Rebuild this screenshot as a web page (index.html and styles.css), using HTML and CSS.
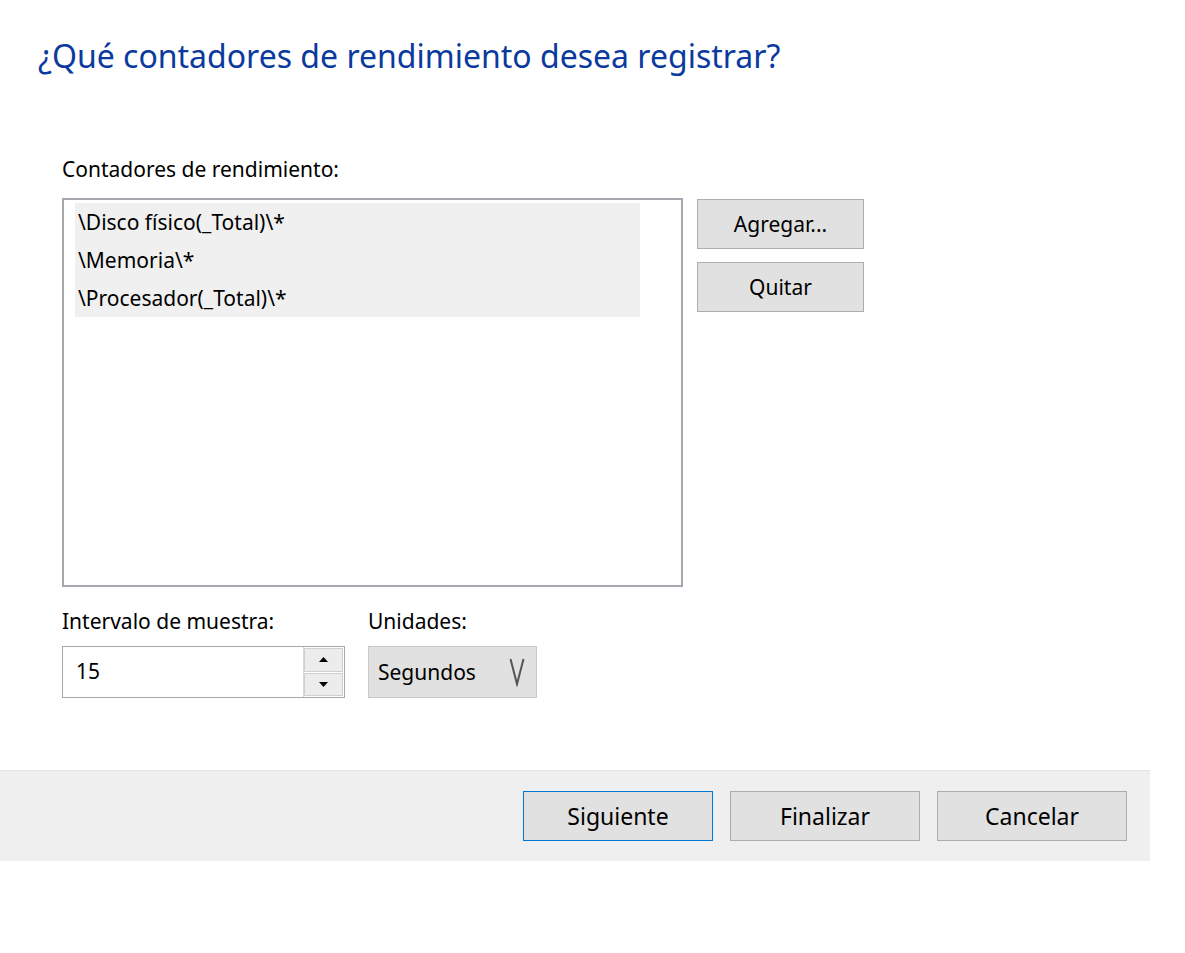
FILE: index.html
```html
<!DOCTYPE html>
<html lang="es">
<head>
<meta charset="utf-8">
<title>Contadores de rendimiento</title>
<link rel="stylesheet" href="styles.css">
</head>
<body>
<div class="wizard">
  <h1 class="title">¿Qué contadores de rendimiento desea registrar?</h1>
  <div class="content">
    <div class="label label-counters">Contadores de rendimiento:</div>
    <div class="counters-row">
      <div class="listbox">
        <ul class="items">
          <li>\Disco físico(_Total)\*</li>
          <li>\Memoria\*</li>
          <li>\Procesador(_Total)\*</li>
        </ul>
      </div>
      <div class="side-buttons">
        <button class="btn side-btn">Agregar...</button>
        <button class="btn side-btn">Quitar</button>
      </div>
    </div>
    <div class="settings-row">
      <div class="field field-interval">
        <div class="label">Intervalo de muestra:</div>
        <div class="spin">
          <span class="spin-value">15</span>
          <div class="spin-buttons">
            <span class="spin-btn"><svg width="9" height="5" viewBox="0 0 9 5"><polygon points="0,5 9,5 4.5,0" fill="#000"/></svg></span>
            <span class="spin-btn"><svg width="9" height="5" viewBox="0 0 9 5"><polygon points="0,0 9,0 4.5,5" fill="#000"/></svg></span>
          </div>
        </div>
      </div>
      <div class="field field-units">
        <div class="label">Unidades:</div>
        <div class="select">
          <span class="select-value">Segundos</span>
          <svg class="select-arrow" width="16" height="30" viewBox="0 0 16 30"><path d="M1.5 2 L8 27 L14.5 2" fill="none" stroke="#555" stroke-width="2"/></svg>
        </div>
      </div>
    </div>
  </div>
  <div class="footer">
    <button class="btn footer-btn default">Siguiente</button>
    <button class="btn footer-btn">Finalizar</button>
    <button class="btn footer-btn">Cancelar</button>
  </div>
</div>
</body>
</html>
```

FILE: styles.css
```css
html, body {
  margin: 0;
  padding: 0;
  background: #ffffff;
}
body {
  font-family: "Noto Sans", "Open Sans", sans-serif;
  color: #000;
}
.wizard {
  width: 1150px;
  padding-top: 33px;
}
.title {
  margin: 0 0 0 38px;
  font-weight: 400;
  font-size: 32px;
  line-height: 46px;
  color: #0b3a9e;
}
.content {
  padding: 0 0 0 62px;
  margin-top: 76px;
}
.label {
  font-size: 21px;
  line-height: 28px;
  color: #000;
}
.label-counters {
  margin-bottom: 15px;
}
.counters-row {
  display: flex;
  gap: 14px;
  align-items: flex-start;
}
.listbox {
  width: 606px;
  height: 382px;
  border: 2px solid #a5a8ae;
  background: #fff;
  padding: 3px 0 0 11px;
  box-sizing: content-box;
}
.items {
  list-style: none;
  margin: 0;
  padding: 0;
  width: 565px;
  background: #f0f0f0;
}
.items li {
  font-size: 21px;
  height: 38px;
  line-height: 38px;
  padding-left: 3px;
}
.side-buttons {
  display: flex;
  flex-direction: column;
  gap: 13px;
  padding-top: 1px;
}
.btn {
  font-family: inherit;
  background: #e1e1e1;
  border: 1px solid #adadad;
  color: #000;
  font-size: 21px;
  padding: 0;
  margin: 0;
}
.side-btn {
  width: 167px;
  height: 50px;
}
.settings-row {
  display: flex;
  gap: 23px;
  margin-top: 20px;
}
.field .label {
  margin-bottom: 11px;
}
.spin {
  width: 281px;
  height: 50px;
  border: 1px solid #a9a9a9;
  display: flex;
  align-items: stretch;
  box-sizing: content-box;
}
.spin-value {
  flex: 1;
  font-size: 21px;
  line-height: 48px;
  padding-left: 13px;
}
.spin-buttons {
  width: 39px;
  display: flex;
  flex-direction: column;
  gap: 1px;
  padding: 1px 1px 1px 0;
  border-left: 1px solid #d6d6d6;
}
.spin-btn {
  flex: 1;
  background: #ececec;
  border: 1px solid #cfcfcf;
  display: flex;
  align-items: center;
  justify-content: center;
}
.select {
  box-sizing: border-box;
  width: 169px;
  height: 52px;
  background: #e1e1e1;
  border: 1px solid #c9c9c9;
  display: flex;
  align-items: center;
  justify-content: space-between;
  padding: 0 11px 0 9px;
}
.select-value {
  font-size: 21px;
}
.footer {
  margin-top: 72px;
  height: 90px;
  background: #efefef;
  border-top: 1px solid #e4e4e4;
  display: flex;
  justify-content: flex-end;
  align-items: center;
  gap: 17px;
  padding-right: 23px;
}
.footer-btn {
  width: 190px;
  height: 50px;
  font-size: 23px;
}
.footer-btn.default {
  border: 1px solid #0078d7;
}
```
